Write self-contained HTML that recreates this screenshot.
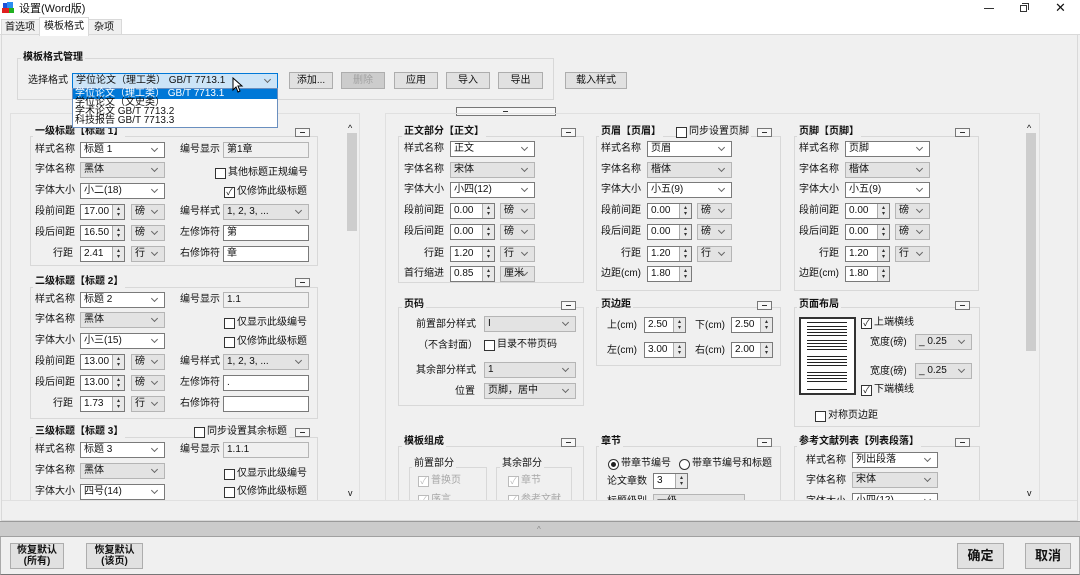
<!DOCTYPE html>
<html><head><meta charset="utf-8"><style>
*{box-sizing:border-box;margin:0;padding:0}
body{width:1080px;height:575px;overflow:hidden;background:#f0f0f0;font-family:"Liberation Sans","Noto Sans CJK SC",sans-serif;font-size:10px;color:#111;position:relative}
.a{position:absolute}
.t{position:absolute;white-space:nowrap;line-height:12px;font-size:10px}
.b{font-weight:bold}
.cb,.sp,.tx{position:absolute;height:16px;border:1px solid #7a7a7a;background:#fff;font-size:10px;line-height:14px;padding-left:3px;white-space:nowrap;overflow:hidden}
.g{background:#e3e3e3;border-color:#b5b5b5}
.cb::after{content:"";position:absolute;right:7px;top:3px;width:4px;height:4px;border-right:1px solid #666;border-bottom:1px solid #666;transform:rotate(45deg)}
.sp::after{content:"▴\A▾";white-space:pre;font-size:6px;line-height:6px;text-align:center;color:#333;padding-top:1px;position:absolute;right:0;top:0;width:11px;height:14px;background:#e8e8e8;border-left:1px solid #aaa}
.ck{position:absolute;width:11px;height:11px;border:1px solid #333;background:#fff;font-size:9px;line-height:9px;text-align:center}
.gf{position:absolute;border:1px solid #d8d8d8}
.mn{position:absolute;width:15px;height:9px;border:1px solid #777;background:#f7f7f7}
.mn::after{content:"";position:absolute;left:4px;top:3px;width:5px;height:1px;background:#333}
.btn{position:absolute;height:17px;border:1px solid #adadad;background:#e1e1e1;text-align:center;line-height:15px;font-size:10px}
.hb{position:absolute;background:#f0f0f0;padding:0 2px}
</style></head><body>
<div class="a" style="left:0;top:0;width:1080px;height:18px;background:#fff"></div>
<div class="a" style="left:3px;top:3px;width:7px;height:7px;background:#1e4fd8"></div>
<div class="a" style="left:7px;top:2px;width:6px;height:6px;background:#2a8cf0"></div>
<div class="a" style="left:2px;top:8px;width:8px;height:5px;background:#e02020"></div>
<div class="a" style="left:9px;top:8px;width:5px;height:5px;background:#20b020"></div>
<div class="t" style="left:19px;top:3px;font-size:11px">设置(Word版)</div>
<div class="a" style="left:984px;top:8px;width:10px;height:1px;background:#333"></div>
<div class="a" style="left:1020px;top:5px;width:7px;height:7px;border:1px solid #333"></div>
<div class="a" style="left:1022px;top:3px;width:7px;height:7px;border-top:1px solid #333;border-right:1px solid #333"></div>
<div class="t" style="left:1055px;top:2px;font-size:13px">✕</div>
<div class="a" style="left:0;top:18px;width:1080px;height:17px;background:#fff;border-bottom:1px solid #d9d9d9"></div>
<div class="a" style="left:1px;top:19px;width:39px;height:16px;border:1px solid #d9d9d9;background:#f0f0f0"></div>
<div class="t" style="left:5px;top:22px">首选项</div>
<div class="a" style="left:39px;top:17px;width:50px;height:19px;border:1px solid #d9d9d9;border-bottom:none;background:#fff"></div>
<div class="t" style="left:44px;top:21px">模板格式</div>
<div class="a" style="left:88px;top:19px;width:34px;height:16px;border:1px solid #d9d9d9;background:#f0f0f0"></div>
<div class="t" style="left:94px;top:22px">杂项</div>
<div class="a" style="left:1px;top:35px;width:1077px;height:486px;border:1px solid #d9d9d9;border-top:none"></div>

<div class="gf" style="left:17px;top:58px;width:537px;height:42px"></div>
<div class="t b hb" style="left:21px;top:52px">模板格式管理</div>
<div class="t" style="left:28px;top:75px">选择格式</div>
<div class="cb" style="left:72px;top:73px;width:206px;background:#cce4f7;border-color:#0078d7">学位论文（理工类） GB/T 7713.1</div>
<div class="btn" style="left:289px;top:72px;width:44px">添加...</div>
<div class="btn" style="left:341px;top:72px;width:44px;color:#a0a0a0;background:#ccc">删除</div>
<div class="btn" style="left:394px;top:72px;width:44px">应用</div>
<div class="btn" style="left:446px;top:72px;width:44px">导入</div>
<div class="btn" style="left:498px;top:72px;width:45px">导出</div>
<div class="btn" style="left:565px;top:72px;width:62px">载入样式</div>
<div class="a" style="left:456px;top:107px;width:100px;height:9px;border:1px solid #777;background:#f7f7f7"></div>
<div class="a" style="left:503px;top:111px;width:5px;height:1px;background:#333"></div>

<div class="a" style="left:10px;top:113px;width:350px;height:388px;border:1px solid #e0e0e0"></div>
<div class="a" style="left:346px;top:122px;width:12px;height:376px;background:#f0f0f0"></div>
<div class="t" style="left:348px;top:122px;font-size:9px">^</div>
<div class="a" style="left:347px;top:133px;width:10px;height:98px;background:#cdcdcd"></div>
<div class="t" style="left:348px;top:487px;font-size:9px">v</div>

<div class="gf" style="left:30px;top:136px;width:288px;height:130px"></div>
<div class="t b hb" style="left:33px;top:126px">一级标题【标题 1】</div>
<div class="mn" style="left:295px;top:128px"></div>
<div class="t" style="left:35px;top:144px">样式名称</div><div class="cb" style="left:80px;top:142px;width:85px">标题 1</div>
<div class="t" style="left:180px;top:144px">编号显示</div><div class="tx g" style="left:223px;top:142px;width:86px;background:#f0f0f0">第1章</div>
<div class="t" style="left:35px;top:164px">字体名称</div><div class="cb g" style="left:80px;top:162px;width:85px">黑体</div>
<div class="ck" style="left:215px;top:168px"></div><div class="t" style="left:228px;top:167px">其他标题正规编号</div>
<div class="t" style="left:35px;top:185px">字体大小</div><div class="cb" style="left:80px;top:183px;width:85px">小二(18)</div>
<div class="ck" style="left:224px;top:187px">✓</div><div class="t" style="left:237px;top:186px">仅修饰此级标题</div>
<div class="t" style="left:35px;top:206px">段前间距</div><div class="sp" style="left:80px;top:204px;width:45px">17.00</div><div class="cb g" style="left:131px;top:204px;width:34px">磅</div>
<div class="t" style="left:180px;top:206px">编号样式</div><div class="cb g" style="left:223px;top:204px;width:86px">1, 2, 3, ...</div>
<div class="t" style="left:35px;top:227px">段后间距</div><div class="sp" style="left:80px;top:225px;width:45px">16.50</div><div class="cb g" style="left:131px;top:225px;width:34px">磅</div>
<div class="t" style="left:180px;top:227px">左修饰符</div><div class="tx" style="left:223px;top:225px;width:86px">第</div>
<div class="t" style="left:53px;top:248px">行距</div><div class="sp" style="left:80px;top:246px;width:45px">2.41</div><div class="cb g" style="left:131px;top:246px;width:34px">行</div>
<div class="t" style="left:180px;top:248px">右修饰符</div><div class="tx" style="left:223px;top:246px;width:86px">章</div>

<div class="gf" style="left:30px;top:287px;width:288px;height:132px"></div>
<div class="t b hb" style="left:33px;top:276px">二级标题【标题 2】</div>
<div class="mn" style="left:295px;top:278px"></div>
<div class="t" style="left:35px;top:294px">样式名称</div><div class="cb" style="left:80px;top:292px;width:85px">标题 2</div>
<div class="t" style="left:180px;top:294px">编号显示</div><div class="tx g" style="left:223px;top:292px;width:86px;background:#f0f0f0">1.1</div>
<div class="t" style="left:35px;top:314px">字体名称</div><div class="cb g" style="left:80px;top:312px;width:85px">黑体</div>
<div class="ck" style="left:224px;top:318px"></div><div class="t" style="left:237px;top:317px">仅显示此级编号</div>
<div class="t" style="left:35px;top:335px">字体大小</div><div class="cb" style="left:80px;top:333px;width:85px">小三(15)</div>
<div class="ck" style="left:224px;top:337px"></div><div class="t" style="left:237px;top:336px">仅修饰此级标题</div>
<div class="t" style="left:35px;top:356px">段前间距</div><div class="sp" style="left:80px;top:354px;width:45px">13.00</div><div class="cb g" style="left:131px;top:354px;width:34px">磅</div>
<div class="t" style="left:180px;top:356px">编号样式</div><div class="cb g" style="left:223px;top:354px;width:86px">1, 2, 3, ...</div>
<div class="t" style="left:35px;top:377px">段后间距</div><div class="sp" style="left:80px;top:375px;width:45px">13.00</div><div class="cb g" style="left:131px;top:375px;width:34px">磅</div>
<div class="t" style="left:180px;top:377px">左修饰符</div><div class="tx" style="left:223px;top:375px;width:86px">.</div>
<div class="t" style="left:53px;top:398px">行距</div><div class="sp" style="left:80px;top:396px;width:45px">1.73</div><div class="cb g" style="left:131px;top:396px;width:34px">行</div>
<div class="t" style="left:180px;top:398px">右修饰符</div><div class="tx" style="left:223px;top:396px;width:86px"></div>

<div class="gf" style="left:30px;top:437px;width:288px;height:80px"></div>
<div class="t b hb" style="left:33px;top:426px">三级标题【标题 3】</div>
<div class="ck" style="left:194px;top:427px"></div><div class="t hb" style="left:205px;top:426px">同步设置其余标题</div>
<div class="mn" style="left:295px;top:428px"></div>
<div class="t" style="left:35px;top:444px">样式名称</div><div class="cb" style="left:80px;top:442px;width:85px">标题 3</div>
<div class="t" style="left:180px;top:444px">编号显示</div><div class="tx g" style="left:223px;top:442px;width:86px;background:#f0f0f0">1.1.1</div>
<div class="t" style="left:35px;top:465px">字体名称</div><div class="cb g" style="left:80px;top:463px;width:85px">黑体</div>
<div class="ck" style="left:224px;top:469px"></div><div class="t" style="left:237px;top:468px">仅显示此级编号</div>
<div class="t" style="left:35px;top:486px">字体大小</div><div class="cb" style="left:80px;top:484px;width:85px">四号(14)</div>
<div class="ck" style="left:224px;top:487px"></div><div class="t" style="left:237px;top:486px">仅修饰此级标题</div>

<div class="a" style="left:385px;top:113px;width:655px;height:388px;border:1px solid #e0e0e0"></div>
<div class="a" style="left:1025px;top:122px;width:12px;height:376px;background:#f0f0f0"></div>
<div class="t" style="left:1027px;top:122px;font-size:9px">^</div>
<div class="a" style="left:1026px;top:133px;width:10px;height:218px;background:#cdcdcd"></div>
<div class="t" style="left:1027px;top:487px;font-size:9px">v</div>

<div class="gf" style="left:398px;top:136px;width:186px;height:147px"></div>
<div class="t b hb" style="left:402px;top:126px">正文部分【正文】</div>
<div class="mn" style="left:561px;top:128px"></div>
<div class="t" style="left:404px;top:143px">样式名称</div><div class="cb" style="left:450px;top:141px;width:85px">正文</div>
<div class="t" style="left:404px;top:164px">字体名称</div><div class="cb g" style="left:450px;top:162px;width:85px">宋体</div>
<div class="t" style="left:404px;top:184px">字体大小</div><div class="cb" style="left:450px;top:182px;width:85px">小四(12)</div>
<div class="t" style="left:404px;top:205px">段前间距</div><div class="sp" style="left:450px;top:203px;width:45px">0.00</div><div class="cb g" style="left:500px;top:203px;width:35px">磅</div>
<div class="t" style="left:404px;top:226px">段后间距</div><div class="sp" style="left:450px;top:224px;width:45px">0.00</div><div class="cb g" style="left:500px;top:224px;width:35px">磅</div>
<div class="t" style="left:424px;top:248px">行距</div><div class="sp" style="left:450px;top:246px;width:45px">1.20</div><div class="cb g" style="left:500px;top:246px;width:35px">行</div>
<div class="t" style="left:404px;top:268px">首行缩进</div><div class="sp" style="left:450px;top:266px;width:45px">0.85</div><div class="cb g" style="left:500px;top:266px;width:35px">厘米</div>

<div class="gf" style="left:596px;top:136px;width:185px;height:155px"></div>
<div class="t b hb" style="left:599px;top:126px">页眉【页眉】</div>
<div class="ck" style="left:676px;top:127px"></div><div class="t hb" style="left:687px;top:126px">同步设置页脚</div>
<div class="mn" style="left:757px;top:128px"></div>
<div class="t" style="left:601px;top:143px">样式名称</div><div class="cb" style="left:647px;top:141px;width:85px">页眉</div>
<div class="t" style="left:601px;top:164px">字体名称</div><div class="cb g" style="left:647px;top:162px;width:85px">楷体</div>
<div class="t" style="left:601px;top:184px">字体大小</div><div class="cb" style="left:647px;top:182px;width:85px">小五(9)</div>
<div class="t" style="left:601px;top:205px">段前间距</div><div class="sp" style="left:647px;top:203px;width:45px">0.00</div><div class="cb g" style="left:697px;top:203px;width:35px">磅</div>
<div class="t" style="left:601px;top:226px">段后间距</div><div class="sp" style="left:647px;top:224px;width:45px">0.00</div><div class="cb g" style="left:697px;top:224px;width:35px">磅</div>
<div class="t" style="left:621px;top:248px">行距</div><div class="sp" style="left:647px;top:246px;width:45px">1.20</div><div class="cb g" style="left:697px;top:246px;width:35px">行</div>
<div class="t" style="left:601px;top:268px">边距(cm)</div><div class="sp" style="left:647px;top:266px;width:45px">1.80</div>

<div class="gf" style="left:794px;top:136px;width:185px;height:155px"></div>
<div class="t b hb" style="left:797px;top:126px">页脚【页脚】</div>
<div class="mn" style="left:955px;top:128px"></div>
<div class="t" style="left:799px;top:143px">样式名称</div><div class="cb" style="left:845px;top:141px;width:85px">页脚</div>
<div class="t" style="left:799px;top:164px">字体名称</div><div class="cb g" style="left:845px;top:162px;width:85px">楷体</div>
<div class="t" style="left:799px;top:184px">字体大小</div><div class="cb" style="left:845px;top:182px;width:85px">小五(9)</div>
<div class="t" style="left:799px;top:205px">段前间距</div><div class="sp" style="left:845px;top:203px;width:45px">0.00</div><div class="cb g" style="left:895px;top:203px;width:35px">磅</div>
<div class="t" style="left:799px;top:226px">段后间距</div><div class="sp" style="left:845px;top:224px;width:45px">0.00</div><div class="cb g" style="left:895px;top:224px;width:35px">磅</div>
<div class="t" style="left:819px;top:248px">行距</div><div class="sp" style="left:845px;top:246px;width:45px">1.20</div><div class="cb g" style="left:895px;top:246px;width:35px">行</div>
<div class="t" style="left:799px;top:268px">边距(cm)</div><div class="sp" style="left:845px;top:266px;width:45px">1.80</div>

<div class="gf" style="left:398px;top:307px;width:186px;height:99px"></div>
<div class="t b hb" style="left:402px;top:299px">页码</div>
<div class="mn" style="left:561px;top:301px"></div>
<div class="t" style="left:416px;top:319px">前置部分样式</div><div class="cb g" style="left:484px;top:316px;width:92px">I</div>
<div class="t" style="left:418px;top:340px">（不含封面）</div>
<div class="ck" style="left:484px;top:340px"></div><div class="t" style="left:497px;top:339px">目录不带页码</div>
<div class="t" style="left:416px;top:365px">其余部分样式</div><div class="cb g" style="left:484px;top:362px;width:92px">1</div>
<div class="t" style="left:455px;top:386px">位置</div><div class="cb g" style="left:484px;top:383px;width:92px">页脚，居中</div>

<div class="gf" style="left:596px;top:307px;width:185px;height:59px"></div>
<div class="t b hb" style="left:599px;top:299px">页边距</div>
<div class="mn" style="left:757px;top:301px"></div>
<div class="t" style="left:607px;top:320px">上(cm)</div><div class="sp" style="left:644px;top:317px;width:42px">2.50</div>
<div class="t" style="left:695px;top:320px">下(cm)</div><div class="sp" style="left:731px;top:317px;width:42px">2.50</div>
<div class="t" style="left:607px;top:345px">左(cm)</div><div class="sp" style="left:644px;top:342px;width:42px">3.00</div>
<div class="t" style="left:695px;top:345px">右(cm)</div><div class="sp" style="left:731px;top:342px;width:42px">2.00</div>

<div class="gf" style="left:794px;top:307px;width:186px;height:120px"></div>
<div class="t b hb" style="left:797px;top:299px">页面布局</div>
<div class="mn" style="left:955px;top:301px"></div>
<div class="a" style="left:799px;top:317px;width:57px;height:78px;border:2px solid #333;background:#fff"></div>
<div class="a" style="left:807px;top:322px;width:40px;height:1px;background:#222"></div>
<div class="a" style="left:807px;top:326px;width:40px;height:10px;background:repeating-linear-gradient(#222 0,#222 1px,#fff 1px,#fff 3px)"></div>
<div class="a" style="left:807px;top:340px;width:40px;height:12px;background:repeating-linear-gradient(#222 0,#222 1px,#fff 1px,#fff 3px)"></div>
<div class="a" style="left:807px;top:356px;width:40px;height:12px;background:repeating-linear-gradient(#222 0,#222 1px,#fff 1px,#fff 3px)"></div>
<div class="a" style="left:807px;top:372px;width:40px;height:12px;background:repeating-linear-gradient(#222 0,#222 1px,#fff 1px,#fff 3px)"></div>
<div class="a" style="left:807px;top:389px;width:40px;height:1px;background:#222"></div>
<div class="ck" style="left:861px;top:318px">✓</div><div class="t" style="left:874px;top:317px">上端横线</div>
<div class="t" style="left:870px;top:337px">宽度(磅)</div><div class="cb g" style="left:915px;top:334px;width:57px">_ 0.25</div>
<div class="t" style="left:870px;top:366px">宽度(磅)</div><div class="cb g" style="left:915px;top:363px;width:57px">_ 0.25</div>
<div class="ck" style="left:861px;top:385px">✓</div><div class="t" style="left:874px;top:384px">下端横线</div>
<div class="ck" style="left:815px;top:411px"></div><div class="t" style="left:828px;top:410px">对称页边距</div>

<div class="gf" style="left:398px;top:446px;width:186px;height:70px"></div>
<div class="t b hb" style="left:402px;top:436px">模板组成</div>
<div class="mn" style="left:561px;top:438px"></div>
<div class="gf" style="left:409px;top:467px;width:78px;height:50px"></div>
<div class="t hb" style="left:412px;top:458px">前置部分</div>
<div class="gf" style="left:496px;top:467px;width:76px;height:50px"></div>
<div class="t hb" style="left:500px;top:458px">其余部分</div>
<div class="ck" style="left:418px;top:476px;border-color:#bbb;color:#bbb">✓</div><div class="t" style="left:431px;top:475px;color:#a8a8a8">普换页</div>
<div class="ck" style="left:418px;top:495px;border-color:#bbb;color:#bbb">✓</div><div class="t" style="left:431px;top:494px;color:#a8a8a8">序言</div>
<div class="ck" style="left:508px;top:476px;border-color:#bbb;color:#bbb">✓</div><div class="t" style="left:521px;top:475px;color:#a8a8a8">章节</div>
<div class="ck" style="left:508px;top:495px;border-color:#bbb;color:#bbb">✓</div><div class="t" style="left:521px;top:494px;color:#a8a8a8">参考文献</div>

<div class="gf" style="left:596px;top:446px;width:185px;height:70px"></div>
<div class="t b hb" style="left:599px;top:436px">章节</div>
<div class="mn" style="left:757px;top:438px"></div>
<div class="a" style="left:608px;top:459px;width:11px;height:11px;border:1px solid #333;border-radius:50%;background:#fff"></div>
<div class="a" style="left:611px;top:462px;width:5px;height:5px;border-radius:50%;background:#222"></div>
<div class="t" style="left:621px;top:458px">带章节编号</div>
<div class="a" style="left:679px;top:459px;width:11px;height:11px;border:1px solid #333;border-radius:50%;background:#fff"></div>
<div class="t" style="left:692px;top:458px">带章节编号和标题</div>
<div class="t" style="left:607px;top:476px">论文章数</div><div class="sp" style="left:653px;top:473px;width:35px">3</div>
<div class="t" style="left:607px;top:496px">标题级别</div><div class="tx g" style="left:653px;top:494px;width:92px">一级</div>

<div class="gf" style="left:794px;top:446px;width:186px;height:70px"></div>
<div class="t b hb" style="left:797px;top:436px">参考文献列表【列表段落】</div>
<div class="mn" style="left:955px;top:438px"></div>
<div class="t" style="left:806px;top:455px">样式名称</div><div class="cb" style="left:852px;top:452px;width:86px">列出段落</div>
<div class="t" style="left:806px;top:475px">字体名称</div><div class="cb g" style="left:852px;top:472px;width:86px">宋体</div>
<div class="t" style="left:806px;top:496px">字体大小</div><div class="cb" style="left:852px;top:493px;width:86px">小四(12)</div>

<div class="a" style="left:2px;top:500px;width:1075px;height:20px;background:#f0f0f0;border-top:1px solid #e0e0e0"></div>

<div class="a" style="left:72px;top:88px;width:206px;height:40px;background:#fff;border:1px solid #6a8fbf"></div>
<div class="a" style="left:73px;top:89px;width:204px;height:10px;background:#0078d7"></div>
<div class="t" style="left:75px;top:88px;color:#fff;font-size:10px;line-height:11px">学位论文（理工类） GB/T 7713.1</div>
<div class="t" style="left:75px;top:98px;font-size:10px;line-height:10px">学位论文（文史类）</div>
<div class="t" style="left:75px;top:107px;font-size:10px;line-height:10px">学术论文 GB/T 7713.2</div>
<div class="t" style="left:75px;top:116px;font-size:10px;line-height:10px">科技报告 GB/T 7713.3</div>
<svg class="a" style="left:232px;top:77px" width="12" height="16" viewBox="0 0 12 16"><path d="M1 1 L1 13 L4 10 L6 15 L8 14 L6 9 L10 9 Z" fill="#fff" stroke="#000" stroke-width="1"/></svg>

<div class="a" style="left:0;top:521px;width:1080px;height:16px;background:#cbcbcb;border-top:1px solid #9a9a9a;border-bottom:1px solid #a0a0a0"></div>
<div class="t" style="left:537px;top:524px;font-size:8px;color:#888">^</div>
<div class="a" style="left:0;top:537px;width:1080px;height:38px;background:#f0f0f0;border-bottom:1px solid #777;border-left:1px solid #aaa;border-right:1px solid #aaa"></div>
<div class="btn b" style="left:10px;top:543px;width:54px;height:26px;line-height:11px;font-size:10px;padding-top:1px">恢复默认<br>(所有)</div>
<div class="btn b" style="left:86px;top:543px;width:57px;height:26px;line-height:11px;font-size:10px;padding-top:1px">恢复默认<br>(该页)</div>
<div class="btn b" style="left:957px;top:543px;width:47px;height:26px;line-height:24px;font-size:13px">确定</div>
<div class="btn b" style="left:1025px;top:543px;width:46px;height:26px;line-height:24px;font-size:13px">取消</div>
</body></html>
